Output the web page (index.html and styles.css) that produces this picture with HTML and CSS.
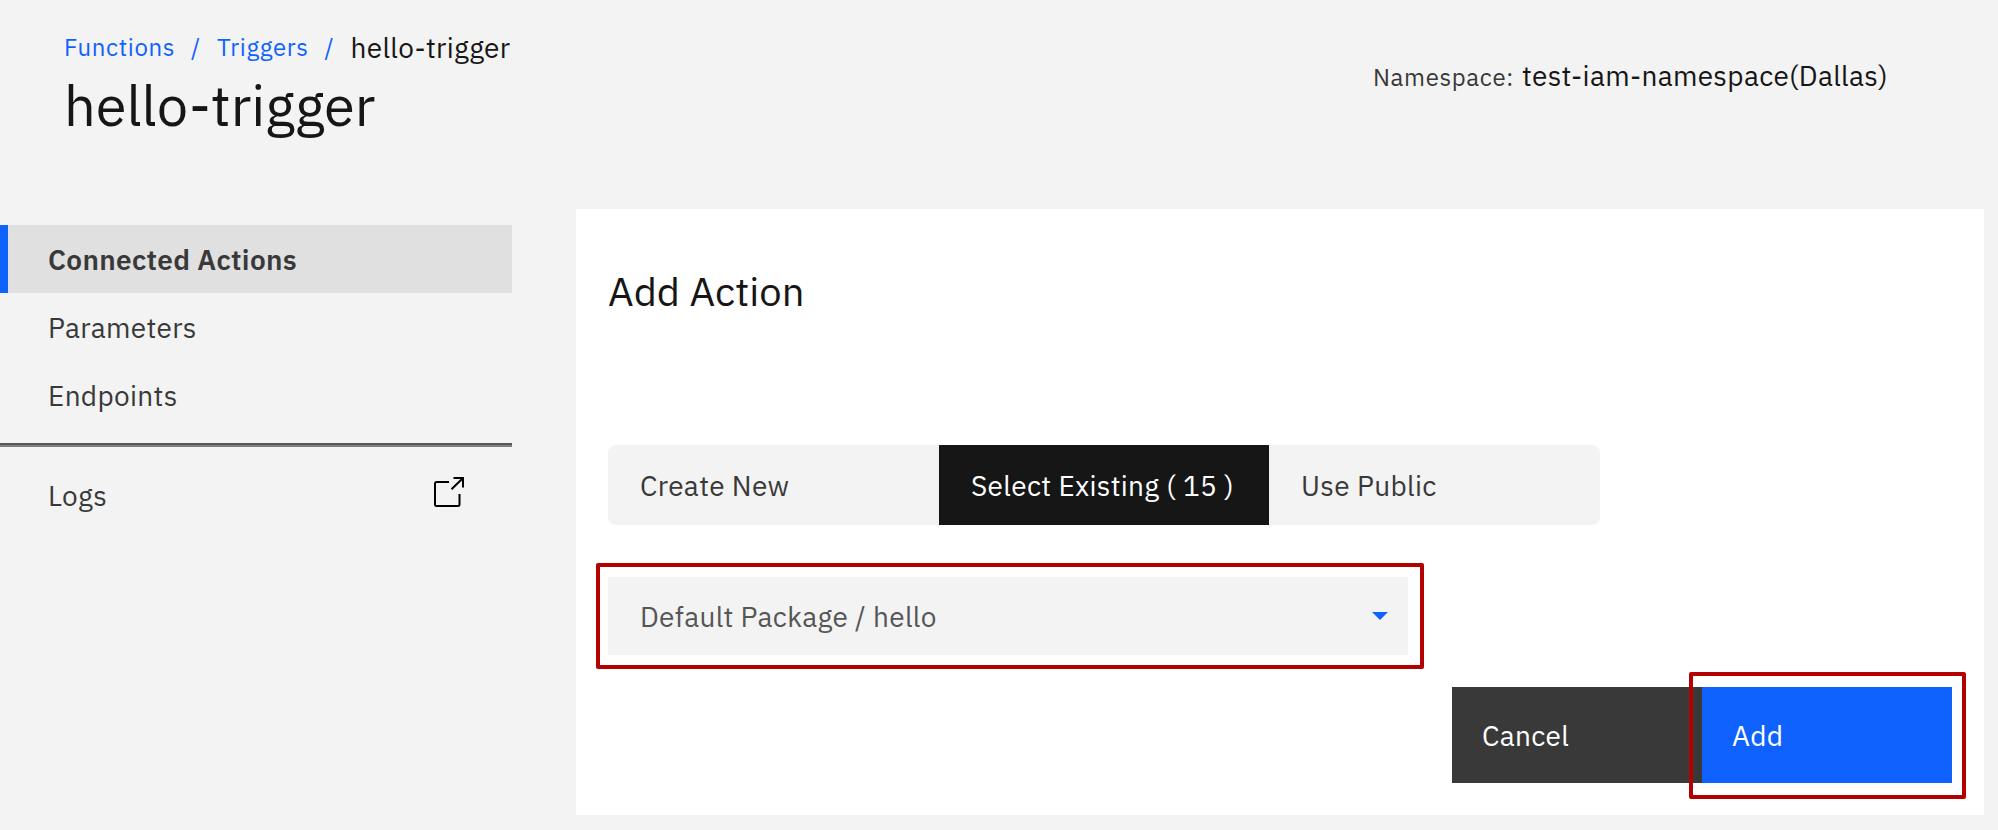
FILE: index.html
```
<!DOCTYPE html>
<html lang="en">
<head>
<meta charset="utf-8">
<title>hello-trigger</title>
<link rel="stylesheet" href="styles.css">
</head>
<body>
<header class="header">
  <div class="heading">
    <nav class="breadcrumb">
      <a class="crumb crumb-functions">Functions</a>
      <span class="slash">/</span>
      <a class="crumb crumb-triggers">Triggers</a>
      <span class="slash">/</span>
      <span class="crumb-current">hello-trigger</span>
    </nav>
    <h1 class="title">hello-trigger</h1>
  </div>
  <div class="namespace">
    <span class="namespace-label">Namespace:</span>
    <span class="namespace-value">test-iam-namespace(Dallas)</span>
  </div>
</header>
<div class="content">
  <nav class="sidebar">
    <a class="nav-item active">Connected Actions</a>
    <a class="nav-item">Parameters</a>
    <a class="nav-item">Endpoints</a>
    <div class="divider"></div>
    <a class="nav-item nav-logs">Logs
      <svg class="launch" viewBox="0 0 30 30" width="30" height="30" fill="none" stroke="#000" stroke-width="2">
        <path d="M15 5H2.500Q1 5 1 6.500V27.500Q1 29 2.500 29H23.500Q25.500 29 25.500 27.500V17"/>
        <path d="M19.500 1H29V10.500M28.500 1.500L17.500 12.300"/>
      </svg>
    </a>
  </nav>
  <main class="panel">
    <h2 class="panel-title">Add Action</h2>
    <div class="tabs">
      <div class="tab">Create New</div>
      <div class="tab selected">Select Existing ( 15 )</div>
      <div class="tab">Use Public</div>
    </div>
    <div class="select">
      <span>Default Package / hello</span>
      <svg class="caret" viewBox="0 0 16 8" width="16" height="8"><path d="M0 0H16L8 8Z" fill="#0f62fe"/></svg>
      <i class="frame frame-select"></i>
    </div>
    <div class="buttons">
      <div class="button cancel">Cancel</div>
      <div class="button add">Add<i class="frame frame-add"></i></div>
    </div>
  </main>
</div>
</body>
</html>
```
FILE: styles.css
```
* {
  box-sizing: border-box;
}

body {
  margin: 0;
  height: 830px;
  overflow: hidden;
  background: #f3f3f3;
  color: #393939;
  font-family: "IBM Plex Sans", "Open Sans", sans-serif;
  font-size: 28px;
  letter-spacing: 0.32px;
  white-space: nowrap;
}

.header {
  display: flex;
  justify-content: space-between;
  height: 209px;
  padding: 29px 0 0 64px;
}

.breadcrumb {
  display: flex;
  align-items: center;
  height: 36px;
  line-height: 36px;
  color: #0f62fe;
  font-size: 24px;
  letter-spacing: 0.64px;
}

.crumb-functions {
  width: 127px;
}

.slash {
  width: 26px;
}

.crumb-triggers {
  width: 107.5px;
}

.crumb-current {
  padding-top: 2px;
  color: #161616;
  font-size: 28px;
  letter-spacing: 0.32px;
}

.title {
  margin: 8px 0 0;
  color: #161616;
  font-size: 56px;
  font-weight: 400;
  line-height: 64px;
  letter-spacing: 0;
}

.namespace {
  display: flex;
  align-items: baseline;
  align-self: flex-start;
  width: 625px;
  margin-top: 27px;
  line-height: 40px;
}

.namespace-label {
  width: 149px;
  font-size: 24px;
  letter-spacing: 0.64px;
}

.namespace-value {
  color: #161616;
}

.content {
  display: flex;
  gap: 64px;
}

.sidebar {
  width: 512px;
  padding-top: 16px;
}

.nav-item {
  display: flex;
  align-items: center;
  justify-content: space-between;
  height: 68px;
  padding: 0 48px;
}

.active {
  padding-left: 40px;
  border-left: 8px solid #0f62fe;
  background: #e0e0e0;
  font-weight: 600;
}

.divider {
  height: 4px;
  margin: 14px 0;
  border-top: 2px solid #565656;
  border-bottom: 2px solid #808080;
}

.launch {
  margin-top: -6px;
}

.panel {
  width: 1408px;
  height: 606px;
  padding: 58px 32px 0;
  background: #fff;
}

.panel-title {
  margin: 0;
  color: #161616;
  font-size: 40px;
  font-weight: 400;
  line-height: 48px;
  letter-spacing: 0;
}

.tabs {
  display: grid;
  grid-template-columns: 331px 330px 331px;
  width: 992px;
  height: 80px;
  margin-top: 130px;
  overflow: hidden;
  border-radius: 8px;
  background: #f3f3f3;
}

.tab {
  height: 80px;
  padding-left: 32px;
  line-height: 81px;
}

.selected {
  background: #161616;
  color: #fff;
}

.select {
  position: relative;
  display: flex;
  align-items: center;
  justify-content: space-between;
  width: 800px;
  height: 78px;
  margin-top: 52px;
  padding: 0 20px 0 32px;
  background: #f3f3f3;
  color: #565656;
}

.frame {
  position: absolute;
  border: 4px solid #b30000;
  border-radius: 2px;
}

.frame-select {
  inset: -14px -16px -14px -12px;
}

.buttons {
  display: flex;
  justify-content: flex-end;
  margin-top: 32px;
}

.button {
  position: relative;
  width: 250px;
  height: 96px;
  padding-left: 30px;
  color: #fff;
  line-height: 97px;
}

.cancel {
  background: #393939;
}

.add {
  background: #0f62fe;
}

.frame-add {
  inset: -15px -14px -16px -13px;
}
```
